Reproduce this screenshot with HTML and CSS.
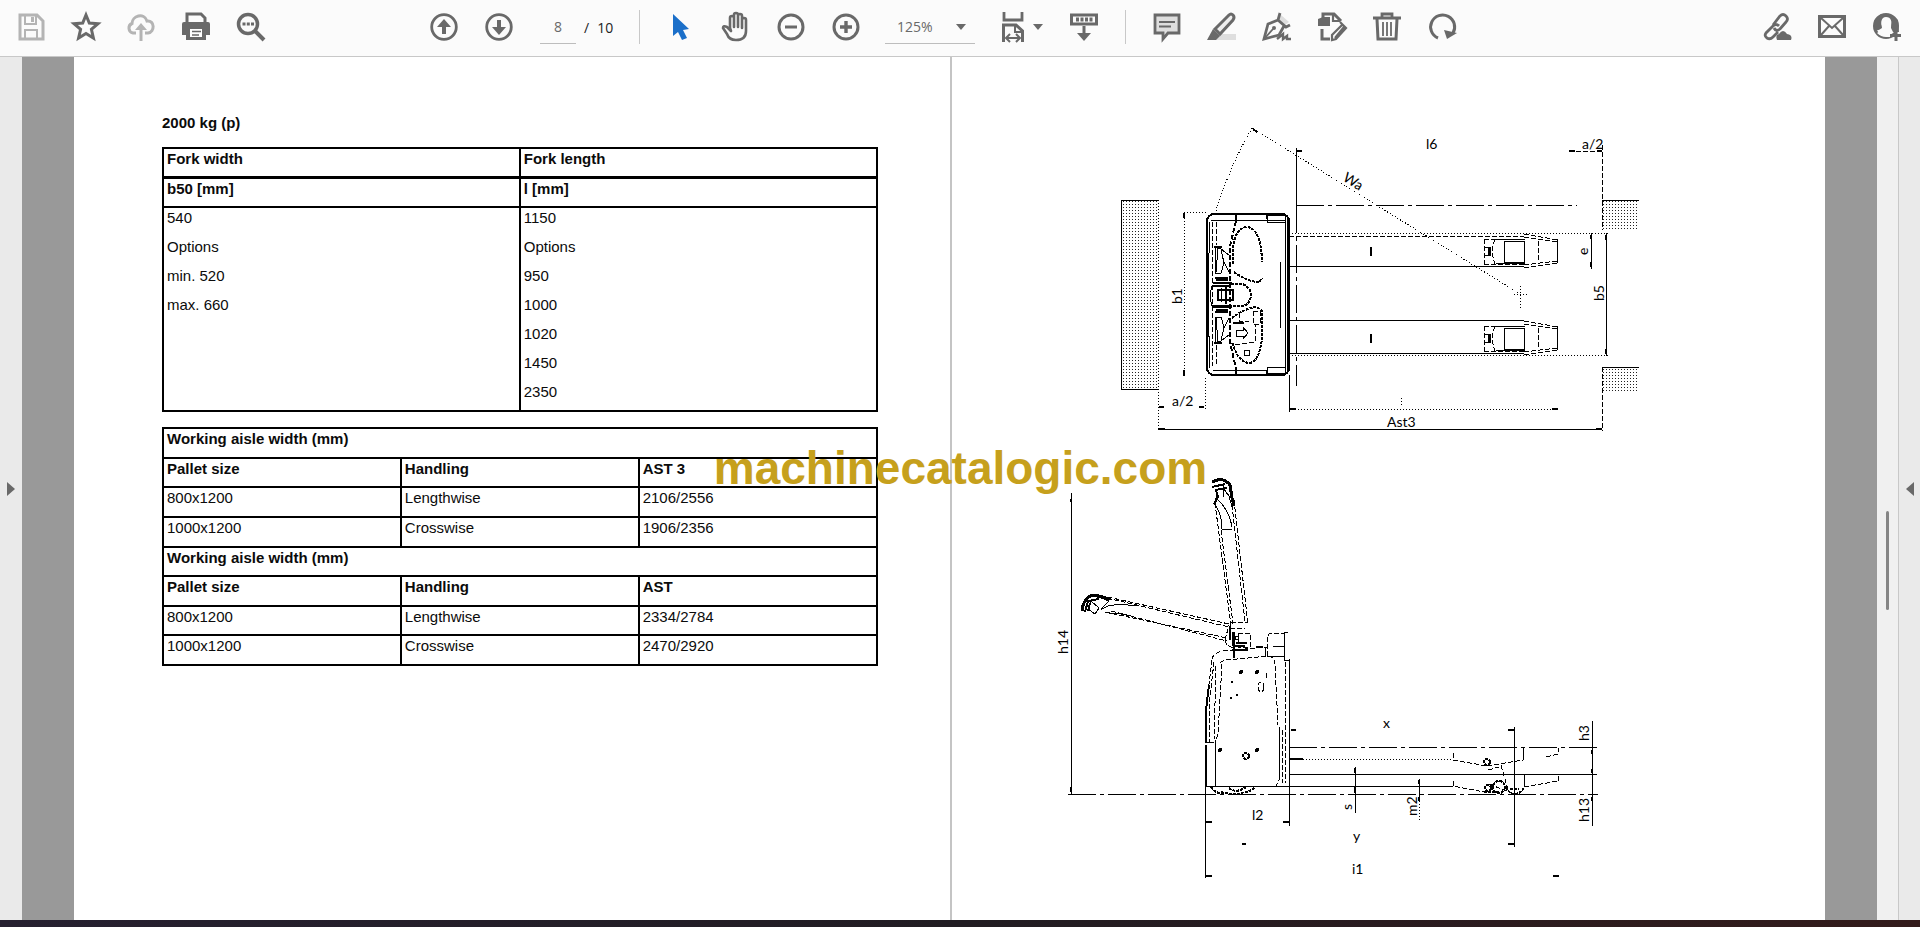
FILE: index.html
```html
<!DOCTYPE html>
<html lang="en">
<head>
<meta charset="utf-8">
<title>Document viewer</title>
<link rel="stylesheet" href="styles.css">
</head>
<body>
<header class="toolbar">
  <div class="group">
    <button class="tool faded" aria-label="Save"><svg viewBox="0 0 28 30"><path d="M3 3h17l6 6v18H3z" fill="none" stroke="currentColor" stroke-width="3"/><path d="M8 3v9h11V3M8 27v-9h12v9" fill="none" stroke="currentColor" stroke-width="2"/><path d="M14 5h3v5h-3z" fill="currentColor"/></svg></button>
    <button class="tool" aria-label="Star"><svg viewBox="0 0 28 30"><path d="M14 3l3.300 8 8.700.7-6.600 5.700 2 8.600-7.400-4.600L6.600 26l2-8.600L2 11.700l8.700-.7z" fill="none" stroke="currentColor" stroke-width="3"/></svg></button>
    <button class="tool faded" aria-label="Upload to cloud"><svg viewBox="0 0 28 30"><path d="M9 21H6a5 5 0 0 1-1-9.500C5 4 17 0 20 9c8-1 8 11 1 12h-3" fill="none" stroke="currentColor" stroke-width="3"/><path d="M14 29V15" stroke="currentColor" stroke-width="3"/><path d="M8 18l6-7 6 7z" fill="currentColor"/></svg></button>
    <button class="tool" aria-label="Print"><svg viewBox="0 0 28 30"><path d="M5 11V2h14l4 4v5" fill="none" stroke="currentColor" stroke-width="3"/><path d="M2 10h24q2 0 2 2v11h-4v5H4v-5H0V12q0-2 2-2z" fill="currentColor"/><path d="M8 17h12v8H8z" fill="#fff"/><path d="M10 19.500h9M10 23h7" stroke="currentColor" stroke-width="1.500"/></svg></button>
    <button class="tool" aria-label="Find"><svg viewBox="0 0 28 30"><circle cx="11" cy="12" r="9.500" fill="none" stroke="currentColor" stroke-width="3.500"/><path d="M18 19l9 9" stroke="currentColor" stroke-width="4"/><path d="M5.500 10.500h3v3h-3zM9.800 10.500h3v3h-3zM14 10.500h3v3h-3z" fill="currentColor"/></svg></button>
  </div>
  <div class="group centre">
    <button class="tool" aria-label="Previous page"><svg viewBox="0 0 28 30"><circle cx="14" cy="15" r="12.300" fill="none" stroke="currentColor" stroke-width="2.800"/><path d="M14 22v-9" stroke="currentColor" stroke-width="4"/><path d="M7 15l7-8 7 8z" fill="currentColor"/></svg></button>
    <button class="tool" aria-label="Next page"><svg viewBox="0 0 28 30"><circle cx="14" cy="15" r="12.300" fill="none" stroke="currentColor" stroke-width="2.800"/><path d="M14 8v9" stroke="currentColor" stroke-width="4"/><path d="M7 15l7 8 7-8z" fill="currentColor"/></svg></button>
    <div class="pager"><input class="page-number" type="text" value="8" aria-label="Page number"><span>/</span><span>10</span></div>
    <span class="divider"></span>
    <button class="tool" aria-label="Select"><svg viewBox="0 0 28 30"><path d="M6 2v22l5-4 4 8 5-2-4-8 6-1z" fill="#1b6fc9"/></svg></button>
    <button class="tool" aria-label="Hand"><svg viewBox="0 0 28 30" fill="none" stroke="currentColor" stroke-width="2.600" stroke-linecap="round" stroke-linejoin="round"><path d="M8 16V6q0-2 2-2t2 2v9V3q0-2 2-2t2 2v12V4q0-2 2-2t2 2v12V8q0-2 2-2t2 2v11q0 9-10 9-7 0-9-6l-4-6q0-3 4-1l4 4z"/></svg></button>
    <button class="tool" aria-label="Zoom out"><svg viewBox="0 0 28 30"><circle cx="14" cy="15" r="12" fill="none" stroke="currentColor" stroke-width="3"/><path d="M8 15h12" stroke="currentColor" stroke-width="3"/></svg></button>
    <button class="tool" aria-label="Zoom in"><svg viewBox="0 0 28 30"><circle cx="14" cy="15" r="12" fill="none" stroke="currentColor" stroke-width="3"/><path d="M8 15h12M14 9v12" stroke="currentColor" stroke-width="3.400"/></svg></button>
    <div class="zoom"><select class="zoom-level" aria-label="Zoom level"><option>125%</option></select><svg class="caret" viewBox="0 0 10 6"><path d="M0 0h10L5 6z" fill="currentColor"/></svg></div>
    <button class="tool wide" aria-label="Fit width"><svg viewBox="0 0 22 30"><path d="M2 0v8h18V0" fill="none" stroke="currentColor" stroke-width="2.800"/><path d="M1.500 30V13H14l6.500 6v11" fill="none" stroke="currentColor" stroke-width="3"/><path d="M13 13v7h7M4 26h14M8 22l-4 4 4 4M14 22l4 4-4 4" fill="none" stroke="currentColor" stroke-width="2"/></svg><svg class="caret" viewBox="0 0 10 6"><path d="M0 0h10L5 6z" fill="currentColor"/></svg></button>
    <button class="tool" aria-label="Hide toolbar"><svg viewBox="0 0 28 30"><rect x="1.500" y="3" width="25" height="9" fill="none" stroke="currentColor" stroke-width="3"/><path d="M6 5.500h3v4H6zM10.500 5.500h3v4h-3zM15 5.500h3v4h-3zM19.500 5.500h3v4h-3z" fill="currentColor"/><path d="M14 14v8" stroke="currentColor" stroke-width="3"/><path d="M7 21h14l-7 8z" fill="currentColor"/></svg></button>
    <span class="divider"></span>
    <button class="tool" aria-label="Comment"><svg viewBox="0 0 28 30"><path d="M2 3h24v18H15l-5 6v-6H2z" fill="#dedede" stroke="currentColor" stroke-width="2.800"/><path d="M6 10h16M6 14.500h12" stroke="currentColor" stroke-width="2"/></svg></button>
    <button class="tool" aria-label="Highlight"><svg viewBox="0 0 28 30"><path d="M9 22h19v6H6z" fill="#dedede"/><path d="M7 17L21 3q2-2 4 0t0 5L12 22z" fill="#eee" stroke="currentColor" stroke-width="3"/><path d="M5 17l7 7-4 4H-1z" fill="currentColor"/></svg></button>
    <button class="tool" aria-label="Sign"><svg viewBox="0 0 28 30" fill="none" stroke="currentColor"><path d="M18 3l8 7-4 3-7-5z" fill="#dedede" stroke="none"/><path d="M17 1l-2 7 8 7 4-2M15 8L5 12 1 27l15-4 5-9" stroke-width="2.800"/><path d="M2 26l8-9" stroke-width="1.800"/><circle cx="11" cy="16" r="2" fill="currentColor" stroke="none"/><path d="M14 27l6-5v5l4-3v3h4" stroke-width="2.400"/></svg></button>
    <button class="tool" aria-label="Edit document"><svg viewBox="0 0 28 30" fill="none" stroke="currentColor"><path d="M5 6V2h11l7 7M4 17v10h8" stroke-width="3"/><path d="M15 2v7h7" stroke-width="2.200"/><path d="M0 7l5-2h7v9H0z" fill="currentColor" stroke="none"/><path d="M22 10l6 6-10 11-4 1v-5l10-10M17 26l9-11" stroke-width="2.200"/></svg></button>
    <button class="tool" aria-label="Delete"><svg viewBox="0 0 28 30"><path d="M0 6h28M9 5V2h10v3" fill="none" stroke="currentColor" stroke-width="2.800"/><path d="M4 7l1 20h18l1-20" fill="none" stroke="currentColor" stroke-width="3"/><path d="M10 10v14M14 10v14M18 10v14" stroke="currentColor" stroke-width="1.800"/></svg></button>
    <button class="tool" aria-label="Rotate"><svg viewBox="0 0 28 30"><path d="M10 26A12 12 0 1 1 25 21" fill="none" stroke="currentColor" stroke-width="3"/><path d="M16 18l13 3-10 6z" fill="currentColor"/></svg></button>
  </div>
  <div class="group right">
    <button class="tool" aria-label="Share link"><svg viewBox="0 0 28 30" fill="none" stroke="currentColor" stroke-width="2.800"><path d="M10 13l7-9q3-3 6 0t0 6l-6 7q-4 3-6-1M16 14q-3-3-6 0l-7 7q-2 3 1 5t6-1l5-5"/><path d="M14 28q-2-5 2-6 4-6 8 0 6 1 4 6z" fill="currentColor" stroke="none"/></svg></button>
    <button class="tool" aria-label="Mail"><svg viewBox="0 0 28 30" fill="none" stroke="currentColor"><rect x="1.500" y="4.500" width="25" height="20" stroke-width="3"/><path d="M3 6l11 10L25 6M3 23l8-9M25 23l-8-9" stroke-width="2"/></svg></button>
    <button class="tool" aria-label="Invite people"><svg viewBox="0 0 28 30"><circle cx="13" cy="14" r="11.500" fill="none" stroke="currentColor" stroke-width="3"/><path d="M2 19q5-1 7-3-2-10 4-10t5 10l2 4h6l-1-12-8-6H8L1 9z" fill="currentColor"/><path d="M13 5c-5 0-6 6-3 11 0 3-3 3-6 5q4 4 9 4h5v-6c-2 0-2-2-1-4 3-5 1-10-4-10z" fill="#fbfbfb"/><path d="M23 18v11M17 23.500h11" stroke="currentColor" stroke-width="3"/></svg></button>
  </div>
</header>
<main class="workspace">
  <button class="rail" aria-label="Open left pane"><svg class="rail-arrow" viewBox="0 0 8 14"><path d="M0 0l8 7-8 7z" fill="currentColor"/></svg></button>
  <div class="viewer">
    <article class="page">
      <h1 class="heading">2000 kg (p)</h1>
      <table class="forks">
        <thead>
          <tr><th>Fork width</th><th>Fork length</th></tr>
          <tr class="unit"><th>b50 [mm]</th><th>l [mm]</th></tr>
        </thead>
        <tbody><tr>
          <td><p>540</p><p>Options</p><p>min. 520</p><p>max. 660</p></td>
          <td><p>1150</p><p>Options</p><p>950</p><p>1000</p><p>1020</p><p>1450</p><p>2350</p></td>
        </tr></tbody>
      </table>
      <table class="aisles">
        <tr><th colspan="3">Working aisle width (mm)</th></tr>
        <tr><th>Pallet size</th><th>Handling</th><th>AST 3</th></tr>
        <tr><td>800x1200</td><td>Lengthwise</td><td>2106/2556</td></tr>
        <tr><td>1000x1200</td><td>Crosswise</td><td>1906/2356</td></tr>
        <tr><th colspan="3">Working aisle width (mm)</th></tr>
        <tr><th>Pallet size</th><th>Handling</th><th>AST</th></tr>
        <tr><td>800x1200</td><td>Lengthwise</td><td>2334/2784</td></tr>
        <tr><td>1000x1200</td><td>Crosswise</td><td>2470/2920</td></tr>
      </table>
    </article>
    <article class="page drawing-page">
      <svg class="drawing" viewBox="1040 110 640 780" role="img" aria-label="Pallet truck dimensions">
        <defs>
          <pattern id="dots" width="3" height="3" patternUnits="userSpaceOnUse"><rect width="1" height="1" fill="#222"/></pattern>
          <g id="fork-end">
            <path class="dash" d="M1483 239H1523M1483 264H1523M1483 239V264M1494 239Q1489 252 1494 264M1523 234L1557 240M1523 268L1557 263M1523 237L1556 242M1523 265L1556 261M1537 241V262"/>
            <path d="M1556 239V263M1495 239H1524M1495 263H1524M1484 247h5v8h-5M1503 241h20v21h-20z"/>
            <path class="heavy" d="M1370 247V256M1488 248v8"/>
          </g>
          <g id="tiller">
            <path d="M1214 247l6 2 3 14-3 10h-6zM1217 248l-2 24M1220 249l8 6M1223 262l5 10"/>
            <path class="heavy" d="M1213 247h8M1214 278h13M1212 283h19M1215 280h12"/>
          </g>
        </defs>
        <g class="top-view">
          <rect class="hatch" x="1120" y="200" width="37" height="189"/>
          <path d="M1157 200H1120V389H1157"/>
          <path class="dot" d="M1157 200V431M1204 378V409M1183 212V376M1183 212H1207"/>
          <rect class="hatch" x="1602" y="200" width="36" height="30"/>
          <rect class="hatch" x="1602" y="367" width="36" height="24"/>
          <path d="M1601 200H1638M1601 367H1638"/>
          <path class="dash" d="M1601 145V230M1601 367V431M1568 151H1601"/>
          <path d="M1157 429H1601M1295 148V205M1288 375V412"/>
          <path class="centre-line" d="M1295 205V386M1295 205H1576"/>
          <path class="dot" d="M1251 128Q1227 170 1214 214M1251 128L1519 294M1288 409H1557M1519 286V308M1513 294H1527M1400 398V407"/>
          <path class="dot" d="M1288 233H1607M1288 355H1607"/>
          <path class="dash" d="M1288 236H1523"/>
          <path d="M1288 266H1523M1288 320H1523M1288 353H1523M1590 233V269M1605 233V356"/>
          <use href="#fork-end"/><use href="#fork-end" y="87"/>
          <path class="arrows" d="M1158 407h5M1198 407h5M1296 151h5M1568 151h6M1596 151h5M1289 409h6M1551 409h6M1158 429h6M1595 429h6M1252 129l4 3M1183 213v5M1183 370v6M1590 235v4M1590 262v5M1605 235v5M1605 349v5"/>
          <rect x="1206" y="214" width="82" height="161" rx="7" stroke-width="2"/>
          <path d="M1207 220q-3 75 0 150M1209 222q-3 73 0 146M1210 220H1284M1212 370H1266M1284 218V372M1286 216V374M1266 215h18v7h-18zM1266 367h18v6h-18zM1279 262V328"/>
          <path class="dash" d="M1211 222V366M1215 222V245M1215 345V366"/>
          <path class="heavy" d="M1235 214V221M1235 369V375M1266 215V219M1266 370V375"/>
          <path class="dash heavy" d="M1235 221L1229 246V342L1235 369"/>
          <path class="stipple heavy" d="M1232 264V248Q1234 228 1246 227Q1260 228 1261 262M1233 272Q1247 282 1258 282L1261 278"/>
          <path class="stipple heavy" d="M1231 318Q1244 308 1256 307L1261 311V338Q1258 363 1248 363Q1237 362 1231 342"/>
          <path class="dash" d="M1234 345L1254 342V325M1252 311h7v13h-7zM1238 313v8h10"/>
          <path class="heavy" d="M1232 323H1243"/>
          <path d="M1235 330h7v-3l5 6-5 6v-3h-7z"/><circle cx="1246" cy="353" r="3"/>
          <path class="heavy" d="M1211 286H1230M1211 306H1230M1217 290h15v10h-15zM1225 287v17"/>
          <path d="M1211 286Q1208 296 1211 306M1220 288v14"/>
          <path class="stipple heavy" d="M1230 284H1241Q1250 287 1250 296Q1248 306 1240 306H1230"/>
          <use href="#tiller"/><use href="#tiller" transform="matrix(1 0 0 -1 0 590)"/>
        </g>
        <g class="side-view">
          <path d="M1070 493V794M1204 745V878M1288 659V826M1204 786H1452M1288 774H1596M1513 727V847M1591 721V826M1354 767V813M1418 779V798"/>
          <path class="centre-line" d="M1067 794H1597M1288 747H1597"/>
          <path class="dot" d="M1290 759H1450M1418 798V821"/>
          <path class="arrows" d="M1070 499v3M1070 787v5M1205 822h6M1282 822h6M1241 844h4M1507 844h6M1205 876h6M1552 876h6M1290 730h5M1507 730h6M1591 750v4M1591 769v4M1591 797v4M1354 768v5M1354 787v6M1418 780v4M1418 797v4M1288 759h14"/>
          <path class="dash" d="M1211 659Q1212 653 1222 651L1266 647M1211 660L1206 700 1205 745M1213 662L1208 705V742M1215 666L1213 740M1221 664L1217 734 1214 742M1219 663Q1223 659 1236 659L1268 656Q1273 657 1274 664L1277 725M1284 662V783M1281 730V783M1278 727V780L1275 786"/>
          <path class="heavy" d="M1208 685L1205 710V743M1205 745V786"/>
          <path d="M1214 742V786M1206 743L1213 742M1278 727V780M1283 632V660H1289M1266 656H1284M1264 648V657M1272 646H1283V653M1283 632H1287"/>
          <path class="dash" d="M1266 656V637L1269 633H1284M1237 633H1249V647H1237z"/>
          <path class="heavy" d="M1233 632V658M1235 643H1246M1234 646H1244M1231 650H1247M1255 647H1262"/>
          <circle cx="1236" cy="638" r="2"/>
          <g class="dots"><circle cx="1240" cy="672" r="2"/><circle cx="1256" cy="672" r="2"/><circle cx="1219" cy="750" r="2"/><circle cx="1256" cy="750" r="2"/><circle cx="1236" cy="695" r="1"/></g>
          <circle cx="1231" cy="682" r="1"/><circle cx="1230" cy="698" r="1"/><ellipse class="dash" cx="1260" cy="687" rx="3" ry="5"/><circle class="stipple heavy" cx="1245" cy="756" r="3"/><path d="M1265 673v5"/>
          <path class="stipple heavy" d="M1210 787Q1215 795 1226 793M1220 792Q1236 796 1243 792Q1250 792 1255 786M1228 788Q1235 794 1245 787"/>
          <path class="dash" d="M1214 503L1230 626M1220 530L1232 624M1231 505L1244 622M1233 500L1247 625M1230 622H1247M1229 628H1244"/>
          <path d="M1213 503Q1221 514 1221 529H1231M1217 500Q1228 510 1231 527M1214 485h8v12M1222 488l6 8 3 11M1216 492l-2 12"/>
          <path class="bold" d="M1211 482Q1222 476 1229 485L1231 498 1233 506"/>
          <path class="heavy" d="M1211 487L1224 484M1214 490L1226 488M1215 490L1217 497 1213 504"/>
          <path class="dash" d="M1093 594L1228 624M1106 598L1228 627M1104 612L1226 638M1110 611L1226 641M1224 640L1228 625M1224 640Q1224 645 1232 648"/>
          <path d="M1100 610Q1108 602 1135 606M1108 613Q1118 613 1130 616M1090 601l8 7-4 6-7-5zM1100 598l8 3-8 8"/>
          <path class="bold" d="M1081 611Q1082 599 1091 595L1110 599"/>
          <path class="heavy" d="M1084 612L1087 601 1098 599M1089 603L1087 611M1229 626V640M1232 632V646"/>
          <path class="dash" d="M1452 753V760L1486 766 1522 760M1545 757L1557 754V748M1452 781V786L1488 793M1523 787L1557 781V774M1500 765L1507 790M1487 770L1498 767M1488 784L1513 794"/>
          <path d="M1522 748V760M1523 774V787"/>
          <circle class="stipple heavy" cx="1486" cy="762" r="3"/><circle class="stipple heavy" cx="1487" cy="788" r="3"/><circle class="stipple heavy" cx="1498" cy="787" r="6"/><path class="stipple heavy" d="M1505 787Q1508 794 1514 794Q1521 793 1523 787M1509 789h9M1483 792h15"/>
        </g>
        <g class="labels">
          <text x="1425" y="149">l6</text><text x="1581" y="149">a/2</text><text x="1171" y="406">a/2</text><text x="1386" y="427">Ast3</text>
          <text transform="translate(1341 180) rotate(32)">Wa</text>
          <text transform="translate(1181 304) rotate(-90)">b1</text><text transform="translate(1587 255) rotate(-90)">e</text><text transform="translate(1603 301) rotate(-90)">b5</text>
          <text transform="translate(1067 654) rotate(-90)">h14</text><text transform="translate(1588 741) rotate(-90)">h3</text><text transform="translate(1588 822) rotate(-90)">h13</text>
          <text transform="translate(1351 810) rotate(-90)">s</text><text transform="translate(1416 816) rotate(-90)">m2</text>
          <text x="1382" y="728">x</text><text x="1251" y="820">l2</text><text x="1352" y="841">y</text><text x="1351" y="874">i1</text>
        </g>
      </svg>
    </article>
    <div class="watermark">machinecatalogic.com</div>
  </div>
  <div class="scroll-track"><div class="scroll-thumb"></div></div>
  <button class="rail rail-right" aria-label="Open right pane"><svg class="rail-arrow" viewBox="0 0 8 14"><path d="M8 0L0 7l8 7z" fill="currentColor"/></svg></button>
</main>
<footer class="taskbar"></footer>
</body>
</html>
```

FILE: styles.css
```css
* { box-sizing: border-box; }
body {
  margin: 0;
  min-height: 100vh;
  display: flex;
  flex-direction: column;
  background: #fff;
  color: #0b0b0b;
  font-family: "Liberation Sans", Arial, sans-serif;
  font-size: 15px;
}
button, input, select { font: inherit; color: inherit; background: none; border: 0; border-radius: 0; padding: 0; margin: 0; }

.toolbar {
  display: flex;
  align-items: center;
  height: 57px;
  padding: 0 19px 2px 17px;
  background: #fbfbfb;
  border-bottom: 1px solid #c8c8c8;
  color: #696969;
  font-family: "Open Sans", "Noto Sans", sans-serif;
  font-size: 14px;
}
.group { display: flex; align-items: center; gap: 27px; }
.centre { margin-left: 165px; }
.right { margin-left: auto; }
.tool { flex: none; width: 28px; height: 30px; display: flex; align-items: center; }
.tool svg { display: block; width: 28px; height: 30px; overflow: visible; }
.faded { color: #b4b4b4; }
.wide { width: 41px; justify-content: space-between; }
.wide svg { width: 22px; }
.tool .caret, .caret { width: 10px; height: 6px; }
.divider { width: 1px; height: 34px; background: #c8c8c8; }
.pager { display: flex; align-items: center; gap: 8px; width: 72px; color: #222; }
.page-number { width: 36px; height: 34px; border-bottom: 1px solid #bdbdbd; text-align: center; color: #696969; }
.zoom { display: grid; align-items: center; width: 90px; margin-left: -2px; }
.zoom-level, .zoom .caret { grid-area: 1 / 1; }
.zoom-level { appearance: none; width: 100%; height: 34px; padding-left: 12px; border-bottom: 1px solid #bdbdbd; }
.zoom .caret { justify-self: end; margin-right: 9px; pointer-events: none; }

.workspace { flex: 1; display: flex; }
.rail { width: 22px; background: #eaeaea; display: flex; align-items: center; justify-content: center; color: #696969; }
.rail-arrow { width: 8px; height: 14px; }
.rail-right { border-left: 1px solid #c8c8c8; }
.viewer { position: relative; flex: 1; display: flex; padding: 0 52px; background: #999; }
.page { flex: 0 0 50%; min-width: 0; padding: 56px 72px 24px 88px; background: #fff; }
.drawing-page { padding: 53px 24px 24px 89px; border-left: 2px solid #c4c4c4; }
.drawing { display: block; width: 640px; max-width: 100%; height: auto; }
.scroll-track { width: 21px; padding-top: 454px; background: #f0f0f0; }
.scroll-thumb { width: 3px; height: 99px; margin: 0 auto; background: #858585; border-radius: 2px; }
.taskbar { height: 7px; background: linear-gradient(90deg, #262030, #211c22 50%, #331b1b); }

.heading { margin: 0 0 14px; font-size: 15px; line-height: 20px; font-weight: bold; }
table { width: 100%; table-layout: fixed; border-collapse: collapse; }
th, td { border: 2px solid #000; padding: 0 3px; text-align: left; vertical-align: top; line-height: 20px; }
p { margin: 0; line-height: 20px; }
p + p { margin-top: 9px; }
.forks th { height: 29px; }
.forks .unit th { border-top-width: 3px; height: 30px; }
.forks td { height: 204px; }
.aisles { height: 239px; margin-top: 15px; }

.watermark {
  position: absolute;
  left: 50%;
  top: 388px;
  transform: translateX(-50%);
  margin-left: 11px;
  font-size: 46px;
  line-height: 46px;
  font-weight: bold;
  color: #c6a01c;
}

.drawing path, .drawing rect, .drawing circle, .drawing ellipse { fill: none; stroke: #000; shape-rendering: crispEdges; }
.drawing pattern rect { fill: #222; stroke: none; }
.drawing .hatch { fill: url(#dots); stroke: none; }
.drawing .dot { stroke-dasharray: 1 2; }
.drawing .dash { stroke-dasharray: 5 2; }
.drawing .stipple { stroke-dasharray: 3 1; }
.drawing .centre-line { stroke-dasharray: 28 4 4 4; }
.drawing .heavy, .drawing .arrows { stroke-width: 2; }
.drawing .bold { stroke-width: 3; }
.drawing .dots circle { fill: #000; stroke: none; }
.labels { font-family: Lato, "Open Sans", sans-serif; font-size: 14px; fill: #000; }
```
